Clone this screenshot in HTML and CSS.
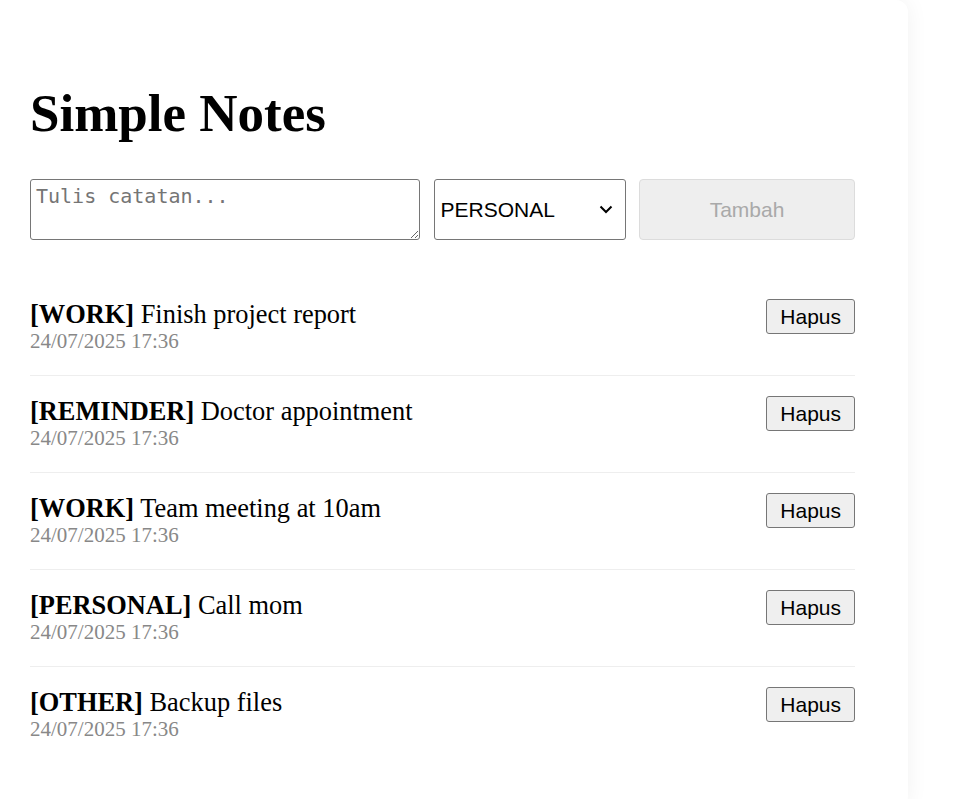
FILE: index.html
```html
<!DOCTYPE html>
<html lang="id">
<head>
<meta charset="utf-8">
<title>Simple Notes</title>
<link rel="stylesheet" href="styles.css">
</head>
<body>
<div class="card">
  <h1 class="title">Simple Notes</h1>
  <form class="note-form">
    <textarea class="note-input" placeholder="Tulis catatan..."></textarea>
    <select class="note-category">
      <option>WORK</option>
      <option selected>PERSONAL</option>
      <option>REMINDER</option>
      <option>OTHER</option>
    </select>
    <button type="button" class="add-btn" disabled>Tambah</button>
  </form>
  <ul class="note-list">
    <li class="note">
      <div class="note-body">
        <div class="note-text"><strong>[WORK]</strong> Finish project report</div>
        <div class="note-date">24/07/2025 17:36</div>
      </div>
      <button type="button" class="del-btn">Hapus</button>
    </li>
    <li class="note">
      <div class="note-body">
        <div class="note-text"><strong>[REMINDER]</strong> Doctor appointment</div>
        <div class="note-date">24/07/2025 17:36</div>
      </div>
      <button type="button" class="del-btn">Hapus</button>
    </li>
    <li class="note">
      <div class="note-body">
        <div class="note-text"><strong>[WORK]</strong> Team meeting at 10am</div>
        <div class="note-date">24/07/2025 17:36</div>
      </div>
      <button type="button" class="del-btn">Hapus</button>
    </li>
    <li class="note">
      <div class="note-body">
        <div class="note-text"><strong>[PERSONAL]</strong> Call mom</div>
        <div class="note-date">24/07/2025 17:36</div>
      </div>
      <button type="button" class="del-btn">Hapus</button>
    </li>
    <li class="note">
      <div class="note-body">
        <div class="note-text"><strong>[OTHER]</strong> Backup files</div>
        <div class="note-date">24/07/2025 17:36</div>
      </div>
      <button type="button" class="del-btn">Hapus</button>
    </li>
  </ul>
</div>
</body>
</html>
```

FILE: styles.css
```css
html, body {
  margin: 0;
  background: #ffffff;
  font-family: "Liberation Serif", "Times New Roman", serif;
  color: #000;
}

.card {
  width: 825px;
  margin-left: -23px;
  padding: 48px 53px 40px;
  background: #fff;
  border-radius: 12px;
  box-shadow: 0 0 22px rgba(0, 0, 0, 0.06);
  min-height: 720px;
}

.title {
  font-size: 53px;
  font-weight: bold;
  margin: 35px 0 35px;
  line-height: 61px;
}

.note-form {
  display: grid;
  grid-template-columns: 390px 192px 216px;
  column-gap: 13.5px;
  height: 61px;
  margin: 0 0 39px;
}

.note-input {
  box-sizing: border-box;
  height: 61px;
  font-family: "DejaVu Sans Mono", monospace;
  font-size: 20px;
  padding: 4px 5px;
  border: 1px solid #767676;
  border-radius: 3px;
  margin: 0;
}

.note-input::placeholder {
  color: #757575;
}

.note-category {
  box-sizing: border-box;
  height: 61px;
  font-family: "Liberation Sans", Arial, sans-serif;
  font-size: 21px;
  padding: 0 30px 0 6px;
  border: 1px solid #767676;
  border-radius: 3px;
  background-color: #fff;
  color: #000;
  margin: 0;
  appearance: none;
  -webkit-appearance: none;
  background-image: url("data:image/svg+xml;utf8,<svg xmlns='http://www.w3.org/2000/svg' width='14' height='9' viewBox='0 0 14 9'><path d='M1.5 1.5 L7 7 L12.5 1.5' fill='none' stroke='black' stroke-width='2'/></svg>");
  background-repeat: no-repeat;
  background-position: right 12px center;
}

.add-btn {
  box-sizing: border-box;
  height: 61px;
  font-family: "Liberation Sans", Arial, sans-serif;
  font-size: 21px;
  background: #eeeeee;
  border: 1px solid #dcdcdc;
  border-radius: 4px;
  color: #a9a9a9;
  margin: 0;
}

.note-list {
  list-style: none;
  margin: 0;
  padding: 0;
}

.note {
  display: flex;
  justify-content: space-between;
  align-items: flex-start;
  padding: 20px 0 22px;
  border-bottom: 1px solid #eeeeee;
}

.note:last-child {
  border-bottom: none;
}

.note-text {
  font-size: 26.4px;
  line-height: 30px;
}

.note-date {
  font-size: 21px;
  line-height: 24px;
  color: #888888;
}

.del-btn {
  box-sizing: border-box;
  height: 35px;
  padding: 0 13px;
  font-family: "Liberation Sans", Arial, sans-serif;
  font-size: 21px;
  background: #efefef;
  border: 1px solid #767676;
  border-radius: 3px;
  color: #000;
  margin: 0;
}
```
